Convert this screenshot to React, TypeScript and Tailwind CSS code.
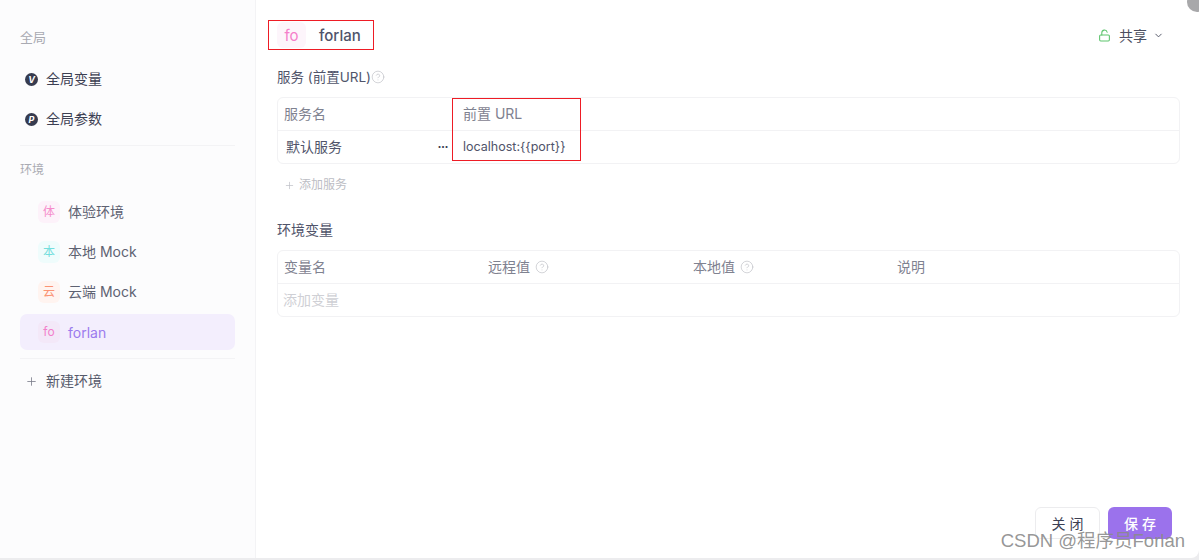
import { ChevronDown, CircleHelp, LockOpen, Plus } from "lucide-react";

const CJK = "font-['Inter','Noto_Sans_CJK_SC',sans-serif]";

const envs = [
  { badge: "体", name: "体验环境", bg: "bg-[#fdf2fa]", color: "text-[#f58ccb]" },
  { badge: "本", name: "本地 Mock", bg: "bg-[#effcfc]", color: "text-[#73dedd]" },
  { badge: "云", name: "云端 Mock", bg: "bg-[#fff4f0]", color: "text-[#fb9373]" },
];

function RoundIcon({ letter }: { letter: string }) {
  return (
    <span className="flex h-[13px] w-[13px] items-center justify-center rounded-full bg-[#363b4f] text-[9px] leading-none font-bold italic text-white">
      {letter}
    </span>
  );
}

function Help() {
  return <CircleHelp size={14} strokeWidth={1} className="text-[#b5b6bd]" />;
}

export default function App() {
  return (
    <div className={`relative h-[560px] w-[1199px] overflow-hidden bg-[#ececee] ${CJK}`}>
      <div className="flex h-[558px] overflow-hidden rounded-br-lg bg-white">
        {/* Sidebar */}
        <aside className="flex w-[256px] shrink-0 flex-col border-r border-[#f3f3f5] bg-[#fcfcfd] pl-5 pr-5">
          <p className="mt-[28px] text-[13px] leading-[18px] text-[#a9aab2]">全局</p>
          <div className="mt-[13px] flex h-[40px] items-center gap-[8px] pl-[5px] text-[14px] text-[#3c4053]">
            <RoundIcon letter="V" />
            <span className="pb-[2px]">全局变量</span>
          </div>
          <div className="flex h-[40px] items-center gap-[8px] pl-[5px] text-[14px] text-[#3c4053]">
            <RoundIcon letter="P" />
            <span className="pb-[2px]">全局参数</span>
          </div>
          <div className="mt-[6px] border-t border-[#f3f3f5]" />
          <p className="mt-[15px] text-[12px] leading-[18px] text-[#a9aab2]">环境</p>
          <div className="mt-[15px] flex flex-col gap-[4px]">
            {envs.map((env) => (
              <div key={env.badge} className="flex h-[36px] items-center gap-[8px] pl-[18px] text-[14px] text-[#5e6272]">
                <span className={`flex h-[22px] w-[22px] items-center justify-center rounded-[6px] text-[12px] ${env.bg} ${env.color}`}>
                  {env.badge}
                </span>
                <span className="pb-[2px]">{env.name}</span>
              </div>
            ))}
            <div className="flex h-[36px] items-center gap-[8px] rounded-[7px] bg-[#f3eefd] pl-[18px] text-[14px] text-[#9b7bee]">
              <span className="flex h-[22px] w-[22px] items-center justify-center rounded-[6px] bg-[#f3e8f8] text-[12px] text-[#f27fcb]">
                fo
              </span>
              <span>forlan</span>
            </div>
          </div>
          <div className="mt-[8px] border-t border-[#f3f3f5]" />
          <div className="mt-[10px] flex h-[24px] items-center gap-[8px] pl-[5px] text-[14px] text-[#565a6b]">
            <Plus size={13} strokeWidth={1.5} className="text-[#7a7d8a]" />
            <span className="pb-[2px]">新建环境</span>
          </div>
        </aside>

        {/* Main */}
        <main className="relative flex-1 pl-[21px] pr-[19px]">
          <div className="mt-[20px] flex items-center justify-between">
            <div className="flex h-[30px] items-center gap-[13px]">
              <span className="flex h-[26px] w-[29px] items-center justify-center rounded-[6px] bg-[#fdf5fb] pt-[2px] text-[15px] text-[#f57fca]">
                fo
              </span>
              <span className="pt-[2px] text-[15px] font-medium text-[#50546a]">forlan</span>
            </div>
            <div className="mr-[16px] flex items-center gap-[8px] text-[14px] text-[#4b4f60]">
              <LockOpen size={13} strokeWidth={2} className="text-[#5fc56f]" />
              <span className="-mr-[2px]">共享</span>
              <ChevronDown size={11} strokeWidth={2} />
            </div>
          </div>

          <div className="mt-[17px] flex h-[20px] items-center text-[13.5px] text-[#50546a]">
            服务 (前置URL)
            <Help />
          </div>
          <div className="mt-[10px] rounded-[6px] border border-[#f2f2f4] text-[14px]">
            <div className="flex h-[33px] items-center border-b border-[#f2f2f4] pb-[2px] text-[#7f8290]">
              <span className="w-[185px] pl-[6px]">服务名</span>
              <span>前置 URL</span>
            </div>
            <div className="flex h-[32px] items-center text-[#50546a]">
              <span className="flex w-[185px] items-center justify-between pr-[15px] pl-[8px]">
                <span className="pb-[2px]">默认服务</span>
                <span className="text-[12px] leading-none font-bold tracking-[-0.5px] text-[#3c4053]">···</span>
              </span>
              <span className="text-[12.5px]">localhost:{"{{port}}"}</span>
            </div>
          </div>
          <div className="mt-[12px] flex h-[18px] items-center gap-[4px] pl-[7px] text-[12px] text-[#bcbdc4]">
            <Plus size={11} strokeWidth={1.5} />
            添加服务
          </div>

          <p className="mt-[26px] text-[14px] leading-[20px] text-[#50546a]">环境变量</p>
          <div className="mt-[10px] rounded-[6px] border border-[#f2f2f4] text-[14px]">
            <div className="grid h-[33px] grid-cols-[204px_205px_204px_1fr] items-center border-b border-[#f2f2f4] pl-[6px] text-[#7f8290]">
              <span className="pb-[2px]">变量名</span>
              <span className="flex items-center gap-[5px]">
                <span className="pb-[2px]">远程值</span> <Help />
              </span>
              <span className="flex items-center gap-[5px]">
                <span className="pb-[2px]">本地值</span> <Help />
              </span>
              <span className="pb-[2px]">说明</span>
            </div>
            <div className="flex h-[32px] items-center pb-[2px] pl-[5px] text-[#cfd0d5]">添加变量</div>
          </div>

          <div className="absolute right-[27px] bottom-[19px] flex gap-[8px] text-[14px]">
            <button className="h-[32px] w-[65px] rounded-[6px] border border-[#ececee] bg-white pl-[4px] tracking-[4px] text-[#3c4053]">
              关闭
            </button>
            <button className="h-[32px] w-[64px] rounded-[6px] bg-[#9b72ec] pl-[4px] font-medium tracking-[4px] text-white">
              保存
            </button>
          </div>
        </main>
      </div>

      {/* Red annotation boxes */}
      <div className="absolute top-[20px] left-[268px] h-[30px] w-[106px] border border-[#ee1c25]" />
      <div className="absolute top-[98px] left-[452px] h-[63px] w-[129px] border border-[#ee1c25]" />

      {/* Corner of the page behind the dialog */}
      <div className="absolute -top-[8px] -right-[8px] h-[20px] w-[20px] rounded-full bg-[#a8a8aa]" />

      {/* Watermark */}
      <span className="absolute right-[14px] bottom-[8px] text-[18.5px] leading-[22px] text-[#8a8a8a]/90 font-['Liberation_Sans','Noto_Sans_CJK_SC',sans-serif]">
        CSDN @程序员Forlan
      </span>
    </div>
  );
}
